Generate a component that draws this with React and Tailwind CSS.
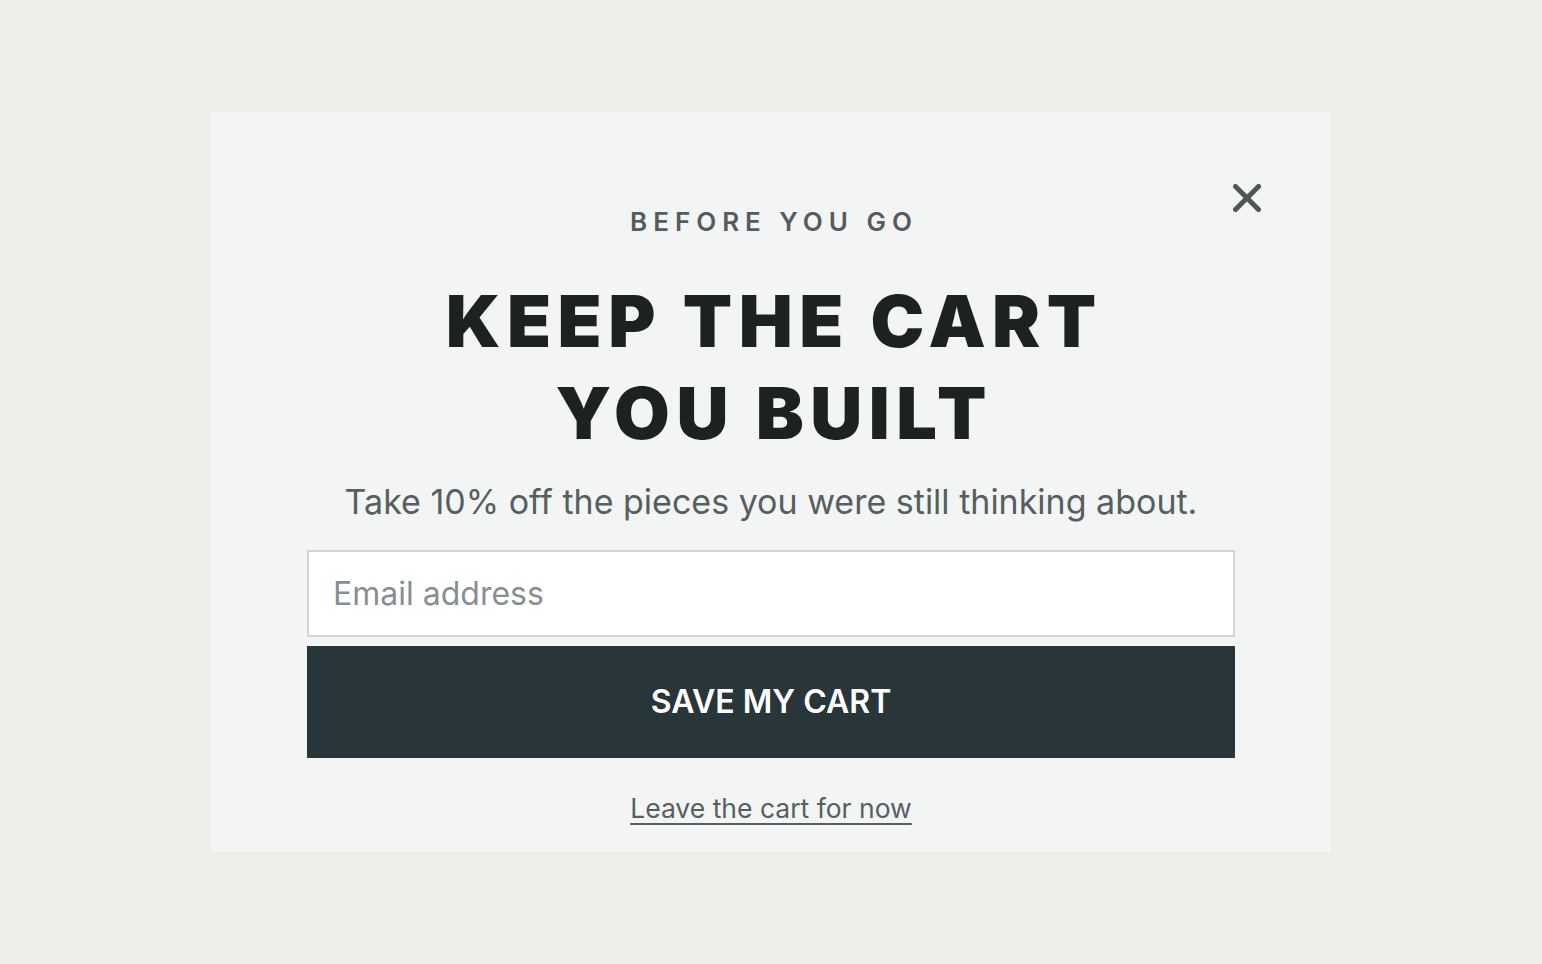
export default function App() {
  return (
    <div className="min-h-screen w-full bg-[#efeeea] pt-[112px] font-['Inter','Liberation_Sans',sans-serif]">
      <div className="relative mx-auto w-[1120px] bg-[#f3f5f4] px-[96px] pt-[97px] pb-[27px]">
        <button className="absolute right-[70px] top-[72px] cursor-pointer" aria-label="Close">
          <svg width="28" height="28" viewBox="0 0 28 28" fill="none">
            <line x1="2.5" y1="2.5" x2="25.5" y2="25.5" stroke="#4f5658" strokeWidth="5" strokeLinecap="round" />
            <line x1="25.5" y1="2.5" x2="2.5" y2="25.5" stroke="#4f5658" strokeWidth="5" strokeLinecap="round" />
          </svg>
        </button>

        <p className="text-center text-[26px] leading-[26px] font-semibold tracking-[0.23em] pl-[0.23em] text-[#535c5f]">
          BEFORE YOU GO
        </p>

        <h1 className="mt-[40px] text-center text-[72px] leading-[92px] font-black tracking-[0.09em] pl-[0.09em] text-[#1c2222]">
          KEEP THE CART
          <br />
          YOU BUILT
        </h1>

        <p className="mt-[22px] text-center text-[34px] leading-[42px] text-[#555f61]">
          Take 10% off the pieces you were still thinking about.
        </p>

        <input
          type="email"
          placeholder="Email address"
          className="mt-[27px] block h-[87px] w-full border-2 border-[#d0d5d6] bg-white pl-[24px] text-[32px] text-[#283539] placeholder:text-[#888f91] outline-none"
        />

        <button className="mt-[9px] block h-[112px] w-full bg-[#283539] text-[32px] font-semibold text-white cursor-pointer">
          SAVE MY CART
        </button>

        <div className="mt-[34px] text-center">
          <a href="#" className="text-[26.5px] leading-[32.5px] text-[#555f61] underline decoration-2 underline-offset-[5px]">
            Leave the cart for now
          </a>
        </div>
      </div>
    </div>
  );
}
